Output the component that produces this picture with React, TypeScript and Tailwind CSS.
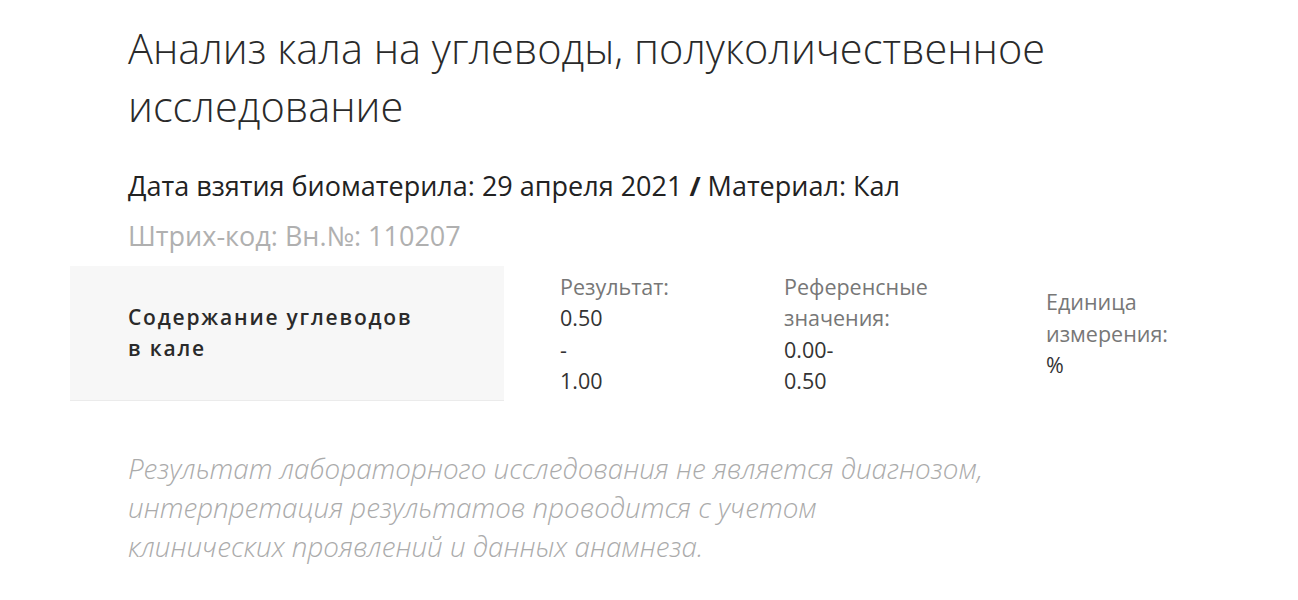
export default function App() {
  return (
    <div className="min-h-screen bg-white font-['Open_Sans',sans-serif]">
      <div className="pl-[128px] pr-[60px] pt-[19px]">
        <h1 className="text-[41.5px] leading-[58px] font-light text-[#2a2a2a] w-[1000px]">
          Анализ кала на углеводы, полуколичественное исследование
        </h1>
        <div className="mt-[33px] text-[27px] leading-[36px] text-[#222]">
          Дата взятия биоматерила: 29 апреля 2021 <span className="font-bold">/</span> Материал: Кал
        </div>
        <div className="mt-[14px] text-[27px] leading-[36px] text-[#b0b0b0]">Штрих-код: Вн.№: 110207</div>
      </div>

      <div className="ml-[70px] mt-[12px] flex items-center">
        <div className="w-[434px] h-[135px] bg-[#f7f7f7] border-b border-[#ebebeb] pl-[58px] flex items-center">
          <div className="text-[21px] leading-[31px] font-semibold tracking-[1.8px] text-[#2a2a2a]">
            Содержание углеводов
            <br />в кале
          </div>
        </div>
        <div className="ml-[56px] w-[224px] text-[21.5px] leading-[31.5px] text-[#333]">
          <div className="text-[#777]">Результат:</div>
          <div>0.50</div>
          <div>-</div>
          <div>1.00</div>
        </div>
        <div className="w-[262px] text-[21.5px] leading-[31.5px] text-[#333]">
          <div className="text-[#777]">Референсные</div>
          <div className="text-[#777]">значения:</div>
          <div>0.00-</div>
          <div>0.50</div>
        </div>
        <div className="text-[21.5px] leading-[31.5px] text-[#333]">
          <div className="text-[#777]">Единица</div>
          <div className="text-[#777]">измерения:</div>
          <div>%</div>
        </div>
      </div>

      <div className="pl-[128px] mt-[48px] text-[27.8px] leading-[39px] italic font-light text-[#ababab]">
        <div>Результат лабораторного исследования не является диагнозом,</div>
        <div>интерпретация результатов проводится с учетом</div>
        <div>клинических проявлений и данных анамнеза.</div>
      </div>
    </div>
  );
}
